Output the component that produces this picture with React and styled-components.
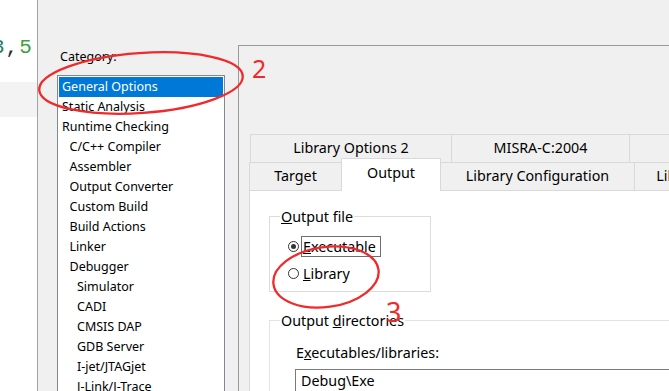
import styled, { createGlobalStyle } from "styled-components";

const GlobalStyle = createGlobalStyle`
  html, body {
    margin: 0;
    padding: 0;
    background: #f0f0f0;
  }
  body {
    width: 669px;
    height: 391px;
    overflow: hidden;
  }
`;

const categories = [
  { label: "General Options", level: 0, selected: true },
  { label: "Static Analysis", level: 0 },
  { label: "Runtime Checking", level: 0 },
  { label: "C/C++ Compiler", level: 1 },
  { label: "Assembler", level: 1 },
  { label: "Output Converter", level: 1 },
  { label: "Custom Build", level: 1 },
  { label: "Build Actions", level: 1 },
  { label: "Linker", level: 1 },
  { label: "Debugger", level: 1 },
  { label: "Simulator", level: 2 },
  { label: "CADI", level: 2 },
  { label: "CMSIS DAP", level: 2 },
  { label: "GDB Server", level: 2 },
  { label: "I-jet/JTAGjet", level: 2 },
  { label: "J-Link/J-Trace", level: 2 },
];

const backTabs = [
  { label: "Library Options 2", width: 202 },
  { label: "MISRA-C:2004", width: 179 },
  { label: "MISRA-C:1998", width: 180 },
];

const frontTabs = [
  { label: "Target", width: 93 },
  { label: "Output", width: 100, active: true },
  { label: "Library Configuration", width: 195 },
  { label: "Library Options 1", width: 160 },
];

export default function App() {
  return (
    <Page>
      <GlobalStyle />
      <Editor>
        <CodeArea>
          <CodeLine>
            <Num $color="#2b7d62">3</Num>
            <Num $color="#2a2a2a">,</Num>
            <Num $color="#3ea33e">5</Num>
          </CodeLine>
        </CodeArea>
        <CurrentLine />
      </Editor>

      <Dialog>
        <Sidebar>
          <CategoryLabel>Category:</CategoryLabel>
          <ListBox>
            {categories.map((c) => (
              <ListItem key={c.label} $level={c.level} $selected={c.selected}>
                {c.label}
              </ListItem>
            ))}
          </ListBox>
        </Sidebar>

        <RightPane>
          <TabRow $shift={1}>
            {backTabs.map((t) => (
              <Tab key={t.label} $width={t.width}>
                {t.label}
              </Tab>
            ))}
          </TabRow>
          <TabRow>
            {frontTabs.map((t) => (
              <Tab key={t.label} $width={t.width} $active={t.active}>
                {t.label}
              </Tab>
            ))}
          </TabRow>
          <Panel>
            <Group>
              <Legend>
                <u>O</u>utput file
              </Legend>
              <RadioList>
                <RadioRow>
                  <Radio $checked />
                  <RadioLabel $focused>
                    <u>E</u>xecutable
                  </RadioLabel>
                </RadioRow>
                <RadioRow>
                  <Radio />
                  <RadioLabel>
                    <u>L</u>ibrary
                  </RadioLabel>
                </RadioRow>
              </RadioList>
            </Group>

            <Group $wide>
              <Legend>
                Output <u>d</u>irectories
              </Legend>
              <DirBody>
                <FieldLabel>
                  E<u>x</u>ecutables/libraries:
                </FieldLabel>
                <TextBox>Debug\Exe</TextBox>
              </DirBody>
            </Group>
          </Panel>
        </RightPane>
      </Dialog>

      <Marks viewBox="0 0 669 391">
        <ellipse
          cx="141"
          cy="83"
          rx="102"
          ry="30"
          transform="rotate(-4 141 83)"
        />
        <ellipse
          cx="326"
          cy="277"
          rx="53"
          ry="30"
          transform="rotate(-8 326 277)"
        />
        <text x="252" y="78" fontSize="25">
          2
        </text>
        <text x="386" y="322" fontSize="27">
          3
        </text>
      </Marks>
    </Page>
  );
}

const Page = styled.div`
  position: relative;
  display: flex;
  width: 669px;
  height: 391px;
  overflow: hidden;
  background: #f0f0f0;
  font-family: "Noto Sans", "Open Sans", sans-serif;
  color: #000;
`;

const Editor = styled.div`
  flex: none;
  width: 37px;
  display: flex;
  flex-direction: column;
  background: #fff;
  overflow: hidden;
`;

const CodeArea = styled.div`
  height: 82px;
  padding-top: 37px;
  box-sizing: border-box;
`;

const CodeLine = styled.div`
  display: flex;
  margin-left: -8px;
  font-family: "Liberation Mono", monospace;
  font-size: 21px;
  line-height: 21px;
  letter-spacing: 1px;
  white-space: pre;
`;

const Num = styled.span`
  color: ${(p) => p.$color};
`;

const CurrentLine = styled.div`
  height: 35px;
  background: #f3f3f3;
`;

const Dialog = styled.div`
  flex: 1;
  display: flex;
  border-left: 1px solid #a3a3a3;
  background: #f0f0f0;
  min-width: 0;
`;

const Sidebar = styled.div`
  flex: none;
  width: 200px;
  padding-left: 19px;
  box-sizing: border-box;
  font-size: 12.5px;
`;

const CategoryLabel = styled.div`
  margin: 47px 0 0 3px;
  line-height: 20px;
`;

const ListBox = styled.div`
  margin-top: 8px;
  width: 168px;
  height: 330px;
  box-sizing: border-box;
  border: 1px solid #828790;
  padding: 1px;
  background: #fff;
`;

const ListItem = styled.div`
  height: 20px;
  line-height: 20px;
  padding-left: ${(p) => 3 + p.$level * 7.5}px;
  white-space: nowrap;
  background: ${(p) => (p.$selected ? "#0078d7" : "transparent")};
  color: ${(p) => (p.$selected ? "#fff" : "#000")};
`;

const RightPane = styled.div`
  flex: 1;
  display: flex;
  flex-direction: column;
  margin-top: 45px;
  padding: 88px 0 0 10px;
  border-top: 1px solid #9a9a9a;
  border-left: 1px solid #9a9a9a;
  font-size: 14.3px;
  min-width: 0;
`;

const TabRow = styled.div`
  display: flex;
  height: 28px;
  margin-left: ${(p) => p.$shift || 0}px;
`;

const Tab = styled.div`
  flex: none;
  position: relative;
  z-index: ${(p) => (p.$active ? 1 : 0)};
  width: ${(p) => p.$width}px;
  height: ${(p) => (p.$active ? 33 : 28)}px;
  margin-top: ${(p) => (p.$active ? -4 : 0)}px;
  box-sizing: border-box;
  display: flex;
  align-items: center;
  justify-content: center;
  padding-bottom: ${(p) => (p.$active ? 6 : 3)}px;
  border: 1px solid #d9d9d9;
  border-bottom: none;
  margin-right: -1px;
  background: ${(p) => (p.$active ? "#fff" : "#f0f0f0")};
  white-space: nowrap;
`;

const Panel = styled.div`
  flex: 1;
  background: #fff;
  border-top: 1px solid #d9d9d9;
  border-left: 1px solid #d9d9d9;
  padding-left: 19px;
  display: flex;
  flex-direction: column;
`;

const Group = styled.fieldset`
  margin: ${(p) => (p.$wide ? "19px" : "16px")} 0 0 0;
  width: ${(p) => (p.$wide ? "500px" : "162px")};
  box-sizing: border-box;
  border: 1px solid ${(p) => (p.$wide ? "#e3e3e3" : "#dcdcdc")};
  padding: 0 0 7px 10px;
  min-inline-size: 0;
`;

const Legend = styled.legend`
  padding: 0 1px;
  line-height: 19px;
  white-space: nowrap;
`;

const RadioList = styled.div`
  display: flex;
  flex-direction: column;
  gap: 6px;
  padding: 10px 0 0 8px;
`;

const RadioRow = styled.div`
  display: flex;
  align-items: center;
  gap: 2px;
  height: 21px;
`;

const Radio = styled.span`
  flex: none;
  width: 11px;
  height: 11px;
  box-sizing: border-box;
  border: 1px solid #333;
  border-radius: 50%;
  background: #fff;
  display: flex;
  align-items: center;
  justify-content: center;

  &::after {
    content: "";
    width: 5px;
    height: 5px;
    border-radius: 50%;
    background: ${(p) => (p.$checked ? "#333" : "transparent")};
  }
`;

const RadioLabel = styled.span`
  height: 21px;
  box-sizing: border-box;
  line-height: 19px;
  padding: 0 4px 0 1px;
  border: 1px solid ${(p) => (p.$focused ? "#6e6e6e" : "transparent")};
  white-space: nowrap;
`;

const DirBody = styled.div`
  padding: 13px 0 0 16px;
`;

const FieldLabel = styled.div`
  line-height: 19px;
`;

const TextBox = styled.div`
  margin: 7px 0 0 -1px;
  width: 400px;
  height: 24px;
  box-sizing: border-box;
  border: 1px solid #7a7a7a;
  padding-left: 5px;
  line-height: 22px;
`;

const Marks = styled.svg`
  position: absolute;
  inset: 0;
  width: 669px;
  height: 391px;
  pointer-events: none;

  ellipse {
    fill: none;
    stroke: #f02a2a;
    stroke-width: 2.3;
  }
  text {
    fill: #f02a2a;
    font-family: "Noto Sans", sans-serif;
  }
`;
